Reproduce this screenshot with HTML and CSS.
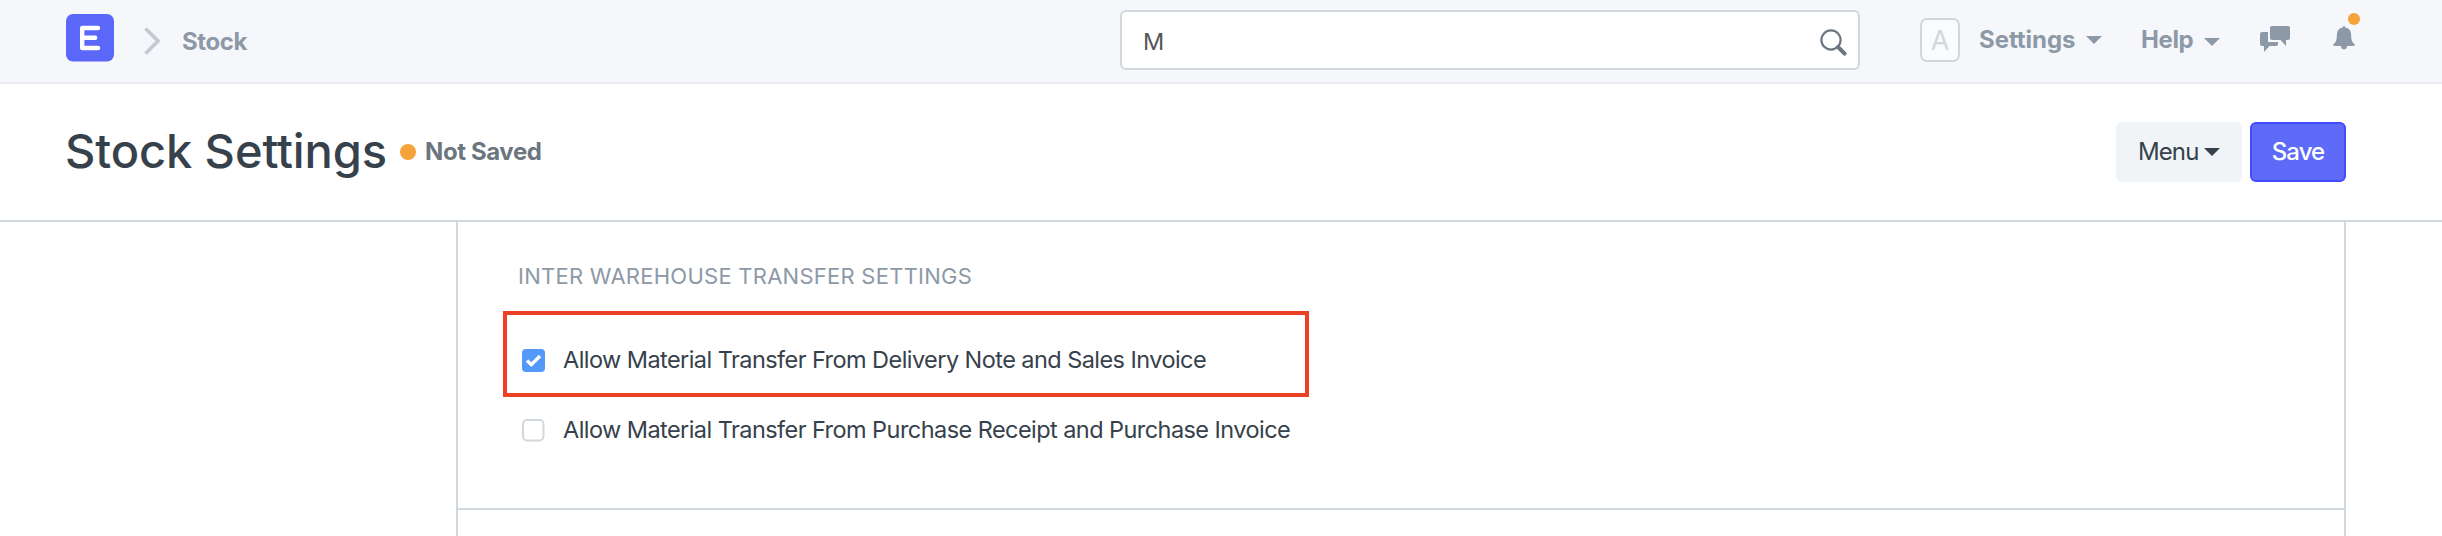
FILE: index.html
```html
<!DOCTYPE html>
<html lang="en">
<head>
<meta charset="utf-8">
<title>Stock Settings</title>
<link rel="stylesheet" href="styles.css">
</head>
<body>
<header class="navbar">
  <svg class="logo" viewBox="0 0 48 48"><rect width="48" height="47.6" rx="7" fill="#5b67f8"/><path d="M32 14H16.200v20H32M16.200 23.700h13" fill="none" stroke="#fff" stroke-width="4.400" stroke-linecap="round" stroke-linejoin="round"/></svg>
  <svg class="chevron" viewBox="0 0 16 28"><path d="M1.500 1.500L14 14 1.500 26.500" fill="none" stroke="#c3cad1" stroke-width="3.800"/></svg>
  <a class="crumb"><span>Stock</span></a>
  <div class="search">
    <span class="query">M</span>
    <svg class="search-icon" viewBox="0 0 27 27"><circle cx="11" cy="11" r="9.600" fill="none" stroke="#6c7680" stroke-width="2.200"/><path d="M18 18l6.600 6.600" stroke="#6c7680" stroke-width="4" stroke-linecap="round"/></svg>
  </div>
  <span class="avatar">A</span>
  <a class="nav-item nav-settings"><span class="t-settings">Settings</span></a>
  <i class="caret caret-settings"></i>
  <a class="nav-item nav-help"><span class="t-help">Help</span></a>
  <i class="caret caret-help"></i>
  <svg class="chat" viewBox="0 0 30 26"><path d="M2 6h6v10h10v2.200q0 1.800-1.800 1.800H9.500L4 26v-6H2q-2 0-2-2V8q0-2 2-2zM12 0h16q2 0 2 2v10q0 2-2 2h-2v6l-5.500-6H12q-2 0-2-2V2q0-2 2-2z" fill="#8d99a6"/></svg>
  <span class="bell-wrap">
    <svg class="bell" viewBox="0 0 22 24"><path d="M11 0q1 0 1.300 1.500Q17.800 2.500 18 8q.2 6.500 1.800 8.500l2 1.800q.4 1.700-1.500 1.700h-6.100q-.7 3.500-3.200 3.500T7.800 20H1.700q-1.900 0-1.500-1.700l2-1.800Q3.800 14.500 4 8q.2-5.500 5.700-6.500Q10 0 11 0z" fill="#8d99a6"/></svg>
    <i class="badge"></i>
  </span>
</header>
<section class="page-head">
  <h1 class="title"><span>Stock Settings</span></h1>
  <i class="status-dot"></i>
  <span class="status">Not Saved</span>
  <button class="btn btn-menu"><span>Menu</span><i class="caret"></i></button>
  <button class="btn btn-save"><span>Save</span></button>
</section>
<main class="content">
  <section class="form-section">
    <h2 class="section-title">INTER WAREHOUSE TRANSFER SETTINGS</h2>
    <label class="check-row highlighted">
      <svg class="checkbox" viewBox="0 0 23 23"><rect width="23" height="23" rx="4" fill="#5399f9"/><path d="M5 11.500l4.300 4.200L18 7" fill="none" stroke="#fff" stroke-width="3.400"/></svg>
      <span class="label">Allow Material Transfer From Delivery Note and Sales Invoice</span>
    </label>
    <label class="check-row">
      <svg class="checkbox" viewBox="0 0 23 23"><rect x="1" y="1" width="20.500" height="20.500" rx="4" fill="#fff" stroke="#d1d8dd" stroke-width="2"/></svg>
      <span class="label">Allow Material Transfer From Purchase Receipt and Purchase Invoice</span>
    </label>
  </section>
</main>
</body>
</html>
```

FILE: styles.css
```css
* { box-sizing: border-box; }
body {
  margin: 0;
  height: 536px;
  overflow: hidden;
  display: flex;
  flex-direction: column;
  background: #fff;
  color: #36414c;
  font-family: Inter, "Liberation Sans", sans-serif;
  font-size: 24px;
  font-feature-settings: "calt" 0;
  white-space: nowrap;
}
svg { display: block; flex: none; }
.navbar {
  display: flex;
  flex: none;
  align-items: flex-start;
  height: 84px;
  padding-left: 66px;
  background: #f5f7fb;
  border-bottom: 2px solid #ebeef1;
}
.logo { width: 48px; height: 48px; margin-top: 14px; }
.chevron { width: 16px; height: 28px; margin: 27px 0 0 30px; }
.crumb { flex: none; width: 938px; margin-left: 22px; line-height: 83px; font-weight: 700; color: #8d99a6; letter-spacing: -0.4px; }
.search {
  display: flex;
  flex: none;
  justify-content: space-between;
  width: 740px;
  height: 60px;
  margin-top: 10px;
  padding: 0 11px 0 21px;
  border: 2px solid #d1d8dd;
  border-radius: 6px;
  background: #fff;
}
.query { line-height: 59px; color: #555; font-size: 23.5px; }
.search-icon { width: 27px; height: 27px; margin-top: 17px; }
.avatar {
  flex: none;
  width: 40px;
  height: 44px;
  margin: 18px 0 0 60px;
  border: 2px solid #d1d8dd;
  border-radius: 7px;
  background: #fafbfc;
  color: #d1d8dd;
  font-size: 27px;
  line-height: 41px;
  text-align: center;
}
.nav-item { flex: none; line-height: 79px; font-weight: 700; color: #8d99a6; }
.nav-settings { width: 107px; margin-left: 19px; letter-spacing: -0.05px; }
.nav-help { width: 63px; margin-left: 39px; letter-spacing: -0.4px; }
.caret {
  display: block;
  flex: none;
  width: 16px;
  height: 8px;
  background: currentColor;
  clip-path: polygon(0 0, 100% 0, 50% 100%);
}
.caret-settings { margin-top: 36px; color: #8d99a6; }
.caret-help { margin-top: 38px; color: #8d99a6; }
.chat { width: 30px; height: 26px; margin: 26px 0 0 40px; }
.bell-wrap { position: relative; flex: none; width: 22px; height: 24px; margin: 26px 0 0 43px; }
.bell { width: 22px; height: 24px; }
.badge { position: absolute; left: 15px; top: -13px; width: 12px; height: 12px; border-radius: 50%; background: #f5a33b; }
.page-head {
  display: flex;
  flex: none;
  align-items: center;
  height: 138px;
  padding: 0 96px 0 65px;
  border-bottom: 2px solid #d1d8dd;
}
.title { flex: none; width: 335px; margin: 0 0 2px; font-size: 47px; font-weight: 500; line-height: 60px; letter-spacing: -0.1px; }
.status-dot { flex: none; width: 16px; height: 16px; border-radius: 50%; background: #f5a33b; }
.status { margin: 0 auto 2px 9px; font-weight: 700; color: #6c7680; letter-spacing: -0.4px; }
.btn {
  display: flex;
  flex: none;
  align-items: center;
  height: 60px;
  padding: 0;
  border: 0;
  border-radius: 6px;
  font: inherit;
}
.btn span { margin-bottom: 2px; }
.btn-menu { width: 126px; padding-left: 22px; background: #f0f4f7; color: #36414c; letter-spacing: -0.9px; }
.btn-menu span { width: 66px; text-align: left; }
.btn-save { width: 96px; margin-left: 8px; justify-content: center; border: 2px solid #444bff; background: #5e6bf8; color: #fff; letter-spacing: -0.9px; font-weight: 500; }
.content {
  flex: 1;
  width: 1890px;
  margin-left: 456px;
  border: solid #d1d8dd;
  border-width: 0 2px;
}
.form-section { display: flex; flex-direction: column; height: 288px; padding: 39px 0 0 45px; border-bottom: 2px solid #d1d8dd; }
.section-title { margin: 0 0 20px 15px; font-size: 22px; font-weight: 400; line-height: 30px; color: #8d99a6; letter-spacing: 0.25px; }
.check-row { display: flex; align-items: center; gap: 18px; width: 806px; height: 60px; padding-left: 19px; font-size: 23.5px; letter-spacing: -0.56px; }
.highlighted { height: 86px; padding: 12px 0 0 15px; border: 4px solid #ee4025; }
.highlighted + .check-row { margin-top: 3px; }
.checkbox { width: 23px; height: 23px; margin-top: 1px; }
.label { margin-bottom: 2px; }
```
